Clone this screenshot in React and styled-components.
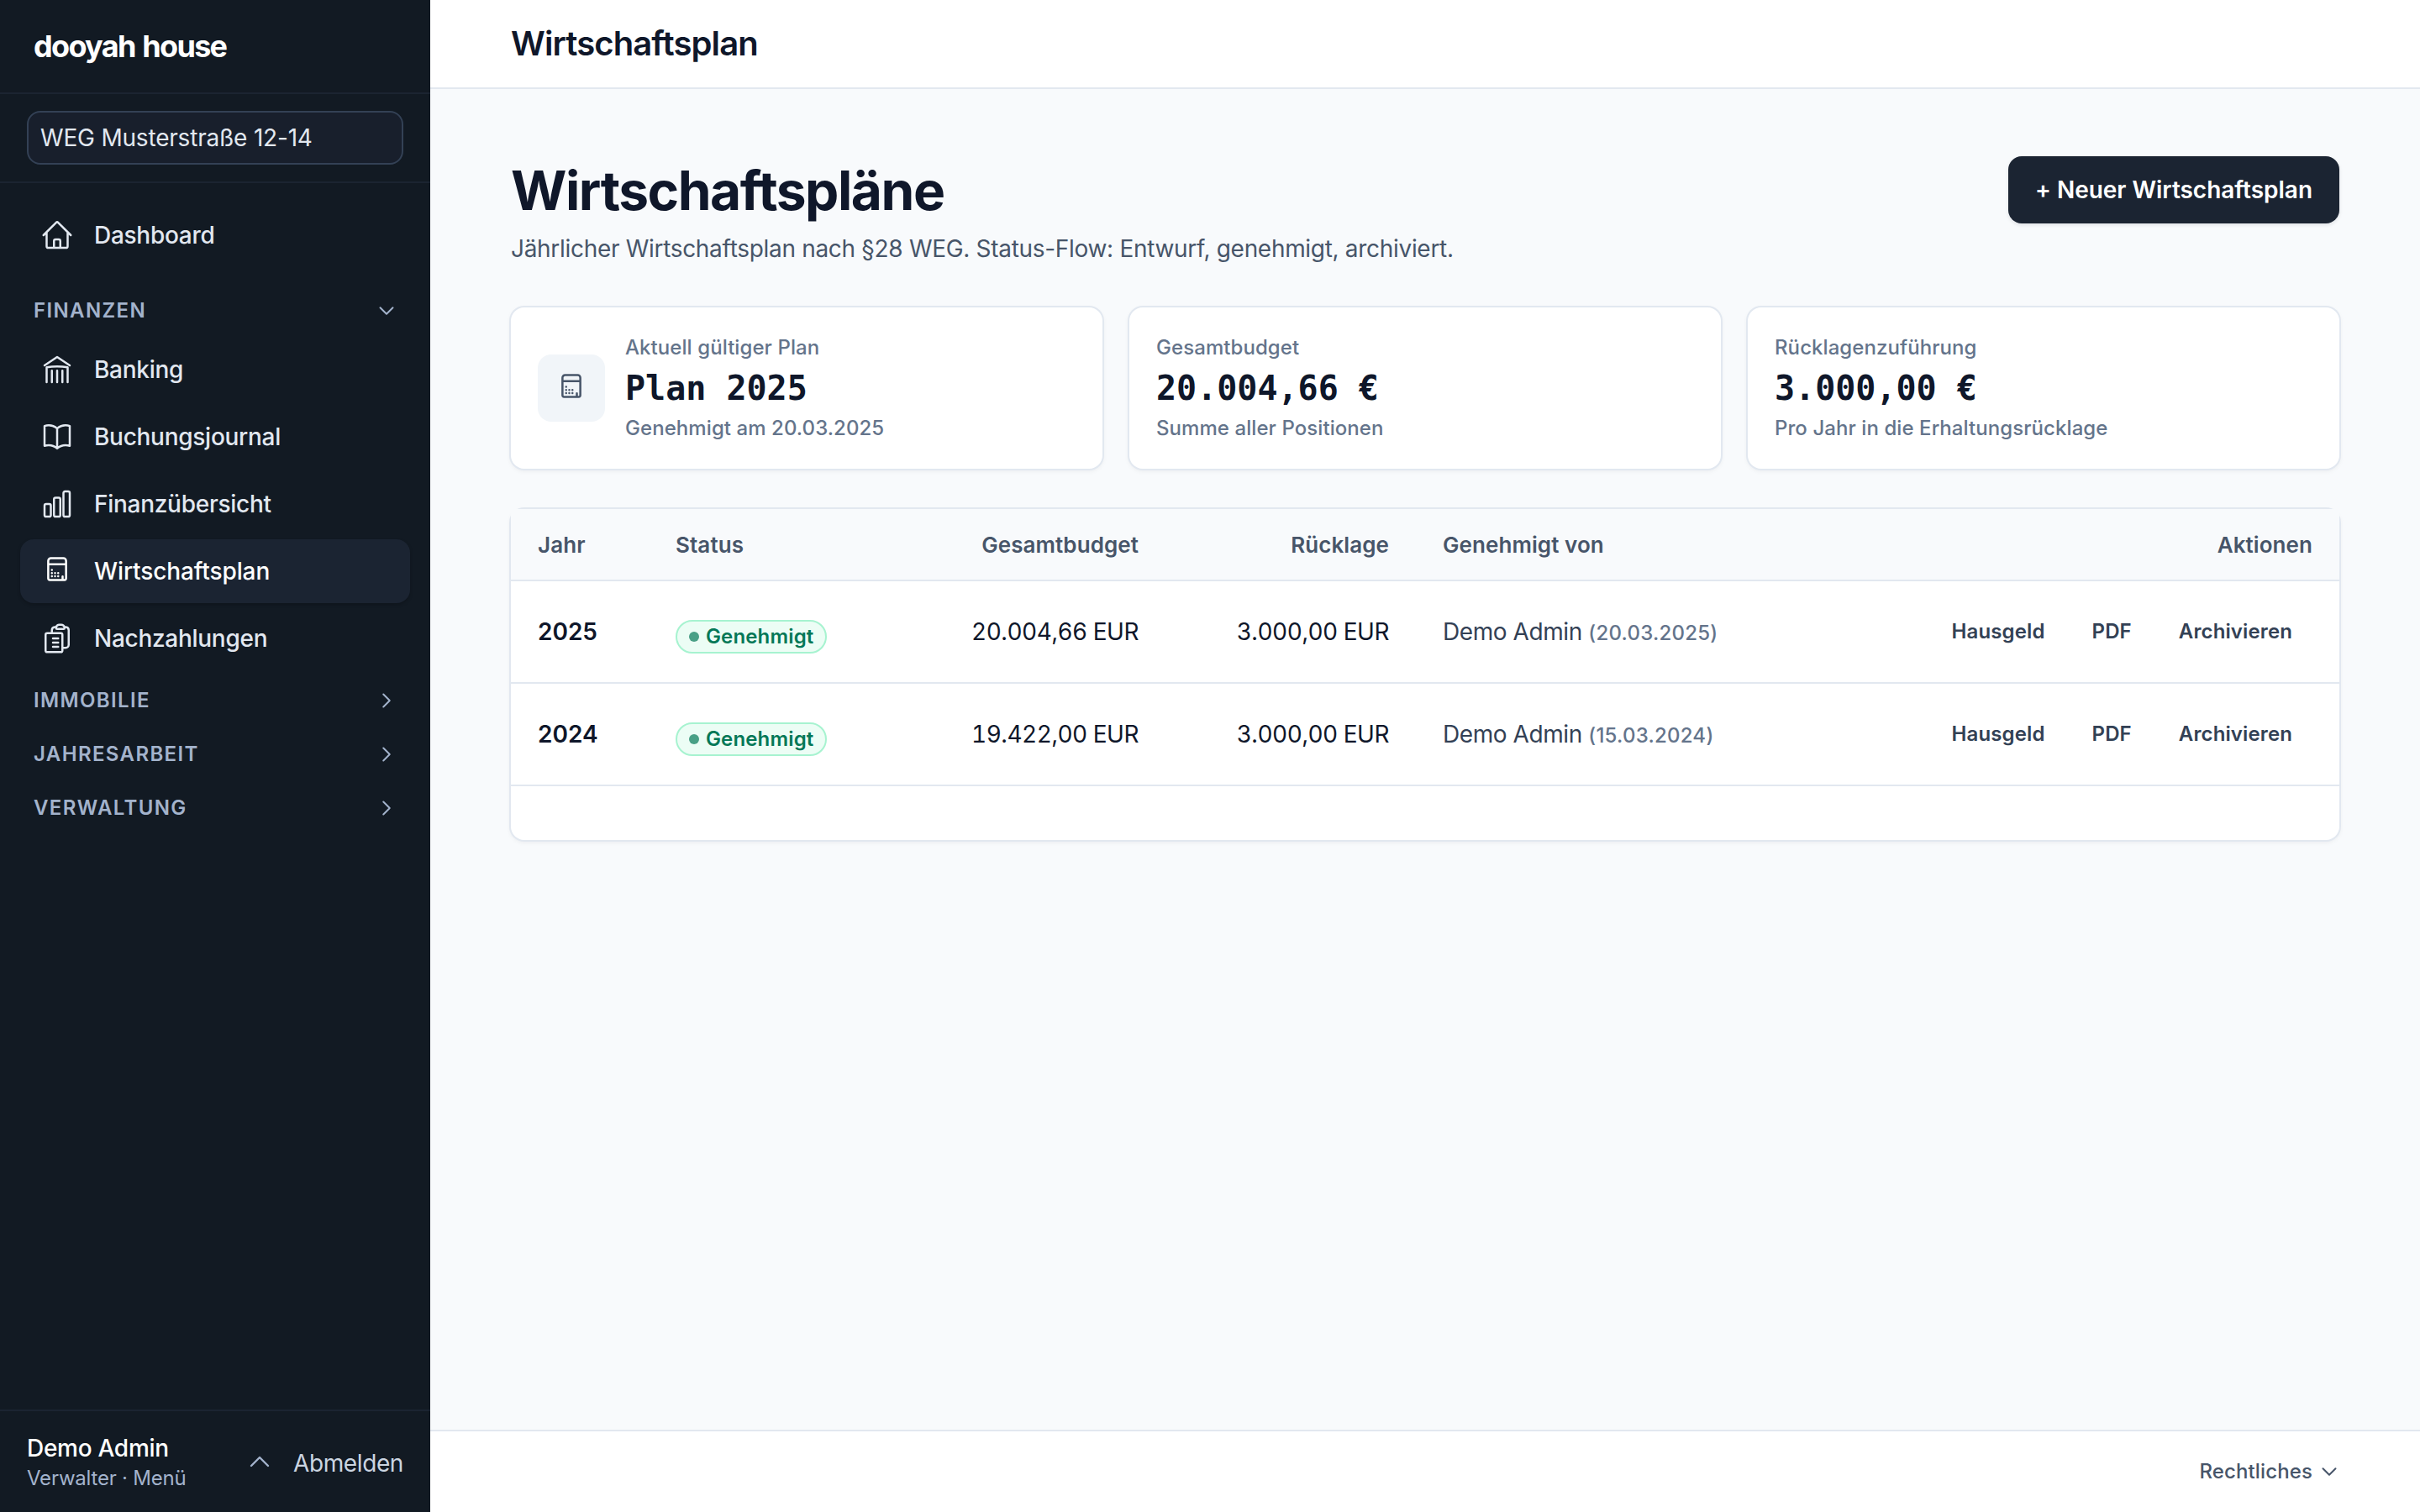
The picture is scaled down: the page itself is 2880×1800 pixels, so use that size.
import styled, { createGlobalStyle } from 'styled-components';

const GlobalStyle = createGlobalStyle`
  *, *::before, *::after { box-sizing: border-box; }
  body {
    margin: 0;
    font-family: 'Inter', 'Liberation Sans', sans-serif;
    font-size: 28px;
    color: #0f172a;
    background: #f8fafc;
    -webkit-font-smoothing: antialiased;
  }
  h1, h2, p { margin: 0; }
  button { font: inherit; border: 0; background: none; padding: 0; cursor: pointer; }
`;

const Layout = styled.div`
  display: flex;
  height: 1800px;
`;

/* Sidebar */

const Sidebar = styled.aside`
  display: flex;
  flex-direction: column;
  flex-shrink: 0;
  width: 512px;
  background: #121a23;
`;

const Brand = styled.div`
  height: 112px;
  padding: 0 40px;
  border-bottom: 2px solid #1b2431;
  line-height: 110px;
  font-size: 36px;
  font-weight: 700;
  letter-spacing: -0.047em;
  word-spacing: 0.05em;
  color: #fff;
`;

const PropertyPicker = styled.div`
  padding: 20px 32px;
  border-bottom: 2px solid #1b2431;
`;

const PropertySelect = styled.div`
  height: 64px;
  padding: 0 14px;
  border: 2px solid #334155;
  border-radius: 16px;
  background: #181f2c;
  line-height: 60px;
  letter-spacing: -0.007em;
  color: #e2e8f0;
`;

const Nav = styled.nav`
  display: flex;
  flex-direction: column;
  flex: 1;
  padding: 24px;
`;

const NavItem = styled.a`
  display: flex;
  align-items: center;
  gap: 24px;
  height: 76px;
  margin-bottom: 4px;
  padding: 0 24px;
  border-radius: 16px;
  font-weight: 500;
  letter-spacing: ${props => (props.$active ? '-0.004em' : '-0.01em')};
  color: ${props => (props.$active ? '#fff' : '#e2e8f0')};
  background: ${props => (props.$active ? '#1b2432' : 'transparent')};
  box-shadow: ${props => (props.$active ? '0 2px 4px rgba(0, 0, 0, 0.2)' : 'none')};
`;

const NavGroup = styled.button`
  display: flex;
  align-items: center;
  justify-content: space-between;
  height: 64px;
  margin-top: ${props => (props.$first ? '16px' : 0)};
  padding: 0 16px;
  font-size: 24px;
  font-weight: 600;
  letter-spacing: 0.057em;
  color: #a3b3cc;
`;

const NavGroupLabel = styled.span`
  padding-bottom: 2px;
`;

const UserBar = styled.div`
  display: flex;
  align-items: center;
  height: 122px;
  padding: 0 32px;
  border-top: 2px solid #1b2431;
`;

const UserInfo = styled.div`
  flex: 1;
`;

const UserName = styled.div`
  line-height: 40px;
  font-weight: 500;
  letter-spacing: -0.01em;
  color: #fff;
`;

const UserRole = styled.div`
  line-height: 32px;
  font-size: 24px;
  letter-spacing: -0.009em;
  color: #a3b3cc;
`;

const UserToggle = styled.span`
  display: flex;
  margin-right: 24px;
  color: #a3b3cc;
`;

const Logout = styled.button`
  padding-top: 4px;
  letter-spacing: -0.014em;
  color: #cbd5e1;
`;

/* Content */

const Content = styled.div`
  display: flex;
  flex-direction: column;
  flex: 1;
`;

const TopBar = styled.header`
  height: 106px;
  padding: 0 96px;
  border-bottom: 2px solid #e2e8f0;
  background: #fff;
  line-height: 104px;
  font-size: 40px;
  font-weight: 600;
  letter-spacing: -0.022em;
`;

const Main = styled.main`
  flex: 1;
  padding: 80px 96px;
`;

const PageHead = styled.div`
  display: flex;
  justify-content: space-between;
  align-items: flex-start;
  margin-bottom: 48px;
`;

const PageTitle = styled.h1`
  line-height: 82px;
  font-size: 64px;
  font-weight: 700;
  letter-spacing: -0.023em;
`;

const PageText = styled.p`
  margin-top: 6px;
  line-height: 44px;
  letter-spacing: -0.011em;
  color: #475569;
`;

const PrimaryButton = styled.button`
  height: 80px;
  padding: 0 32px;
  border-radius: 16px;
  background: #1b2432;
  box-shadow: 0 2px 4px rgba(15, 23, 42, 0.1);
  font-weight: 600;
  letter-spacing: -0.001em;
  color: #fff;
`;

const Stats = styled.div`
  display: grid;
  grid-template-columns: repeat(3, 1fr);
  gap: 32px;
  margin-bottom: 48px;
`;

const StatCard = styled.div`
  display: flex;
  align-items: center;
  gap: 24px;
  height: 192px;
  padding: 0 32px;
  border-radius: 16px;
  background: #fff;
  box-shadow: 0 0 0 2px #e2e8f0, 0 2px 6px rgba(15, 23, 42, 0.08);
`;

const StatIcon = styled.div`
  display: flex;
  align-items: center;
  justify-content: center;
  width: 80px;
  height: 80px;
  border-radius: 16px;
  background: #f1f5f9;
  color: #475569;
`;

const StatLabel = styled.p`
  line-height: 36px;
  font-size: 24px;
  font-weight: 500;
  letter-spacing: 0.003em;
  color: #64748b;
`;

const StatValue = styled.p`
  line-height: 60px;
  font-family: 'DejaVu Sans Mono', monospace;
  font-size: 40px;
  font-weight: 700;
`;

const TableCard = styled.div`
  padding-bottom: 64px;
  border-radius: 16px;
  background: #fff;
  box-shadow: 0 0 0 2px #e2e8f0, 0 2px 6px rgba(15, 23, 42, 0.08);
`;

const Table = styled.table`
  width: 100%;
  table-layout: fixed;
  border-collapse: separate;
  border-spacing: 0;
`;

const HeadCell = styled.th`
  width: ${props => props.$width || 'auto'};
  height: 86px;
  padding: 0 32px;
  border-bottom: 2px solid #e2e8f0;
  background: #f8fafc;
  font-size: 26px;
  font-weight: 600;
  letter-spacing: 0.003em;
  text-align: ${props => (props.$right ? 'right' : 'left')};
  color: #475569;
`;

const Cell = styled.td`
  height: 122px;
  padding: 0 32px;
  border-bottom: 2px solid #e2e8f0;
  font-weight: ${props => (props.$bold ? 600 : 400)};
  text-align: ${props => (props.$right ? 'right' : 'left')};
  color: ${props => (props.$soft ? '#334155' : '#0f172a')};
  white-space: nowrap;
`;

const Amount = styled.span`
  font-variant-numeric: tabular-nums;
  letter-spacing: -0.0175em;
`;

const Badge = styled.span`
  display: flex;
  align-items: center;
  gap: 8px;
  width: fit-content;
  height: 40px;
  margin-top: 12px;
  padding: 0 14px;
  border: 2px solid #a7f3d0;
  border-radius: 20px;
  background: #ecfdf5;
  font-size: 24px;
  font-weight: 600;
  letter-spacing: 0.006em;
  color: #047857;
`;

const BadgeLabel = styled.span`
  padding-bottom: 2px;
`;

const Dot = styled.span`
  width: 12px;
  height: 12px;
  border-radius: 50%;
  background: currentColor;
  opacity: 0.7;
`;

const ApprovedBy = styled.span`
  letter-spacing: -0.015em;
`;

const ApprovedDate = styled.span`
  font-size: 24px;
  font-weight: 450;
  letter-spacing: 0.01em;
  color: #64748b;
`;

const Actions = styled.div`
  display: flex;
  justify-content: flex-end;
  gap: 8px;
`;

const ActionButton = styled.button`
  height: 64px;
  padding: 0 24px 2px;
  font-size: 24px;
  font-weight: 600;
  letter-spacing: 0.005em;
  color: #334155;
`;

const Footer = styled.footer`
  display: flex;
  align-items: center;
  justify-content: flex-end;
  gap: 8px;
  height: 98px;
  padding: 0 96px;
  border-top: 2px solid #e2e8f0;
  background: #fff;
  font-size: 24px;
  font-weight: 500;
  letter-spacing: 0.005em;
  color: #475569;
`;

const FooterLabel = styled.span`
  padding-bottom: 2px;
`;

const icons = {
  home: 'm2.25 12 8.954-8.955c.44-.439 1.152-.439 1.591 0L21.75 12M4.5 9.75v10.125c0 .621.504 1.125 1.125 1.125H9.75v-4.875c0-.621.504-1.125 1.125-1.125h2.25c.621 0 1.125.504 1.125 1.125V21h4.125c.621 0 1.125-.504 1.125-1.125V9.75M8.25 21h8.25',
  bank: 'M12 21v-8.25M15.75 21v-8.25M8.25 21v-8.25M3 9l9-6 9 6m-1.5 12V10.332A48.36 48.36 0 0 0 12 9.75c-2.551 0-5.056.2-7.5.582V21',
  book: 'M12 6.042A8.967 8.967 0 0 0 6 3.75c-1.052 0-2.062.18-3 .512v14.25A8.987 8.987 0 0 1 6 18c2.305 0 4.408.867 6 2.292m0-14.25a8.966 8.966 0 0 1 6-2.292c1.052 0 2.062.18 3 .512v14.25A8.987 8.987 0 0 0 18 18a8.967 8.967 0 0 0-6 2.292m0-14.25v14.25',
  chart: 'M3 13.125C3 12.504 3.504 12 4.125 12h2.25c.621 0 1.125.504 1.125 1.125v6.75C7.5 20.496 6.996 21 6.375 21h-2.25A1.125 1.125 0 0 1 3 19.875v-6.75ZM9.75 8.625c0-.621.504-1.125 1.125-1.125h2.25c.621 0 1.125.504 1.125 1.125v11.25c0 .621-.504 1.125-1.125 1.125h-2.25a1.125 1.125 0 0 1-1.125-1.125V8.625ZM16.5 4.125c0-.621.504-1.125 1.125-1.125h2.25C20.496 3 21 3.504 21 4.125v15.75c0 .621-.504 1.125-1.125 1.125h-2.25a1.125 1.125 0 0 1-1.125-1.125V4.125Z',
  calculator: 'M15.9 15.75V18M8.25 11.1h.008v.008H8.25zM8.25 13.4h.008v.008H8.25zM8.25 15.65h.008v.008H8.25zM10.5 13.4h.008v.008h-.008zM10.5 15.65h.008v.008h-.008zM12.75 13.4h.008v.008h-.008zM12.75 15.65h.008v.008h-.008zM5.625 7.1h12.75M7.5 2.75h9c1.036 0 1.875.84 1.875 1.875v12.5c0 .621-.504 1.125-1.125 1.125H6.75c-.621 0-1.125-.504-1.125-1.125v-12.5c0-1.036.84-1.875 1.875-1.875Z',
  clipboard: 'M9 12h3.75M9 15h3.75M9 18h3.75m3 .75H18a2.25 2.25 0 0 0 2.25-2.25V6.108c0-1.135-.845-2.098-1.976-2.192a48.424 48.424 0 0 0-1.123-.08m-5.801 0c-.065.21-.1.433-.1.664 0 .414.336.75.75.75h4.5a.75.75 0 0 0 .75-.75 2.25 2.25 0 0 0-.1-.664m-5.8 0A2.251 2.251 0 0 1 13.5 2.25H15c1.012 0 1.867.668 2.15 1.586m-5.8 0c-.376.023-.75.05-1.124.08C9.095 4.01 8.25 4.973 8.25 6.108V8.25m0 0H4.875c-.621 0-1.125.504-1.125 1.125v11.25c0 .621.504 1.125 1.125 1.125h9.75c.621 0 1.125-.504 1.125-1.125V9.375c0-.621-.504-1.125-1.125-1.125H8.25Z',
  down: 'm19.5 8.25-7.5 7.5-7.5-7.5',
  right: 'm8.25 4.5 7.5 7.5-7.5 7.5',
  up: 'm4.5 15.75 7.5-7.5 7.5 7.5',
};

const Icon = ({ name, size = 40, stroke = 1.5 }) => (
  <svg
    width={size}
    height={size}
    viewBox="0 0 24 24"
    fill="none"
    stroke="currentColor"
    strokeWidth={stroke}
    strokeLinecap="round"
    strokeLinejoin="round"
  >
    <path d={icons[name]} />
  </svg>
);

const financeItems = [
  { icon: 'bank', label: 'Banking' },
  { icon: 'book', label: 'Buchungsjournal' },
  { icon: 'chart', label: 'Finanzübersicht' },
  { icon: 'calculator', label: 'Wirtschaftsplan', active: true },
  { icon: 'clipboard', label: 'Nachzahlungen' },
];

const closedGroups = ['IMMOBILIE', 'JAHRESARBEIT', 'VERWALTUNG'];

const stats = [
  { icon: 'calculator', label: 'Aktuell gültiger Plan', value: 'Plan 2025', hint: 'Genehmigt am 20.03.2025' },
  { label: 'Gesamtbudget', value: '20.004,66 €', hint: 'Summe aller Positionen' },
  { label: 'Rücklagenzuführung', value: '3.000,00 €', hint: 'Pro Jahr in die Erhaltungsrücklage' },
];

const plans = [
  { year: 2025, budget: '20.004,66 EUR', reserve: '3.000,00 EUR', by: 'Demo Admin', date: '20.03.2025' },
  { year: 2024, budget: '19.422,00 EUR', reserve: '3.000,00 EUR', by: 'Demo Admin', date: '15.03.2024' },
];

const PlanRow = ({ plan }) => (
  <tr>
    <Cell $bold>{plan.year}</Cell>
    <Cell>
      <Badge>
        <Dot />
        <BadgeLabel>Genehmigt</BadgeLabel>
      </Badge>
    </Cell>
    <Cell $right>
      <Amount>{plan.budget}</Amount>
    </Cell>
    <Cell $right>
      <Amount>{plan.reserve}</Amount>
    </Cell>
    <Cell $soft>
      <ApprovedBy>{plan.by} </ApprovedBy>
      <ApprovedDate>({plan.date})</ApprovedDate>
    </Cell>
    <Cell>
      <Actions>
        <ActionButton>Hausgeld</ActionButton>
        <ActionButton>PDF</ActionButton>
        <ActionButton>Archivieren</ActionButton>
      </Actions>
    </Cell>
  </tr>
);

const App = () => (
  <>
    <GlobalStyle />
    <Layout>
      <Sidebar>
        <Brand>dooyah house</Brand>
        <PropertyPicker>
          <PropertySelect>WEG Musterstraße 12-14</PropertySelect>
        </PropertyPicker>
        <Nav>
          <NavItem>
            <Icon name="home" />
            Dashboard
          </NavItem>
          <NavGroup $first>
            <NavGroupLabel>FINANZEN</NavGroupLabel>
            <Icon name="down" size={24} stroke={2} />
          </NavGroup>
          {financeItems.map(item => (
            <NavItem key={item.label} $active={item.active}>
              <Icon name={item.icon} />
              {item.label}
            </NavItem>
          ))}
          {closedGroups.map(group => (
            <NavGroup key={group}>
              <NavGroupLabel>{group}</NavGroupLabel>
              <Icon name="right" size={24} stroke={2} />
            </NavGroup>
          ))}
        </Nav>
        <UserBar>
          <UserInfo>
            <UserName>Demo Admin</UserName>
            <UserRole>Verwalter · Menü</UserRole>
          </UserInfo>
          <UserToggle>
            <Icon name="up" size={32} stroke={1.8} />
          </UserToggle>
          <Logout>Abmelden</Logout>
        </UserBar>
      </Sidebar>
      <Content>
        <TopBar>Wirtschaftsplan</TopBar>
        <Main>
          <PageHead>
            <div>
              <PageTitle>Wirtschaftspläne</PageTitle>
              <PageText>
                Jährlicher Wirtschaftsplan nach §28 WEG. Status-Flow: Entwurf, genehmigt, archiviert.
              </PageText>
            </div>
            <PrimaryButton>+ Neuer Wirtschaftsplan</PrimaryButton>
          </PageHead>
          <Stats>
            {stats.map(stat => (
              <StatCard key={stat.label}>
                {stat.icon && (
                  <StatIcon>
                    <Icon name={stat.icon} />
                  </StatIcon>
                )}
                <div>
                  <StatLabel>{stat.label}</StatLabel>
                  <StatValue>{stat.value}</StatValue>
                  <StatLabel>{stat.hint}</StatLabel>
                </div>
              </StatCard>
            ))}
          </Stats>
          <TableCard>
            <Table>
              <thead>
                <tr>
                  <HeadCell $width="164px">Jahr</HeadCell>
                  <HeadCell $width="318px">Status</HeadCell>
                  <HeadCell $width="297px" $right>Gesamtbudget</HeadCell>
                  <HeadCell $width="298px" $right>Rücklage</HeadCell>
                  <HeadCell $width="500px">Genehmigt von</HeadCell>
                  <HeadCell $right>Aktionen</HeadCell>
                </tr>
              </thead>
              <tbody>
                {plans.map(plan => (
                  <PlanRow key={plan.year} plan={plan} />
                ))}
              </tbody>
            </Table>
          </TableCard>
        </Main>
        <Footer>
          <FooterLabel>Rechtliches</FooterLabel>
          <Icon name="down" size={24} stroke={2} />
        </Footer>
      </Content>
    </Layout>
  </>
);

export default App;
